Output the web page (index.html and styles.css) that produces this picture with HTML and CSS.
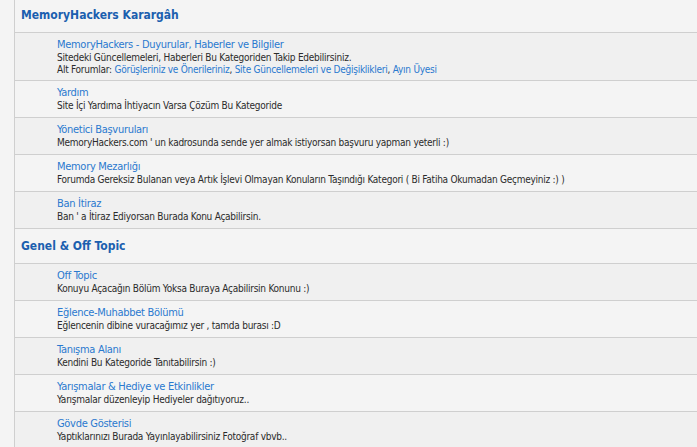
FILE: index.html
```html
<!DOCTYPE html>
<html lang="tr">
<head>
    <meta charset="UTF-8">
    <title>MemoryHackers Forum</title>
    <link rel="stylesheet" href="styles.css">
</head>
<body>

<div class="forumlist">
    <div class="category">MemoryHackers Karargâh</div>

    <div class="forum dark">
        <a class="title" href="#">MemoryHackers - Duyurular, Haberler ve Bilgiler</a>
        <p class="desc">Sitedeki Güncellemeleri, Haberleri Bu Kategoriden Takip Edebilirsiniz.</p>
        <p class="desc">Alt Forumlar: <a href="#">Görüşleriniz ve Önerileriniz</a>, <a href="#">Site Güncellemeleri ve Değişiklikleri</a>, <a href="#">Ayın Üyesi</a></p>
    </div>
    <div class="forum">
        <a class="title" href="#">Yardım</a>
        <p class="desc">Site İçi Yardıma İhtiyacın Varsa Çözüm Bu Kategoride</p>
    </div>
    <div class="forum dark">
        <a class="title" href="#">Yönetici Başvuruları</a>
        <p class="desc">MemoryHackers.com ' un kadrosunda sende yer almak istiyorsan başvuru yapman yeterli :)</p>
    </div>
    <div class="forum">
        <a class="title" href="#">Memory Mezarlığı</a>
        <p class="desc">Forumda Gereksiz Bulanan veya Artık İşlevi Olmayan Konuların Taşındığı Kategori ( Bi Fatiha Okumadan Geçmeyiniz :) )</p>
    </div>
    <div class="forum dark">
        <a class="title" href="#">Ban İtiraz</a>
        <p class="desc">Ban ' a İtiraz Ediyorsan Burada Konu Açabilirsin.</p>
    </div>

    <div class="category">Genel &amp; Off Topic</div>

    <div class="forum dark">
        <a class="title" href="#">Off Topic</a>
        <p class="desc">Konuyu Açacağın Bölüm Yoksa Buraya Açabilirsin Konunu :)</p>
    </div>
    <div class="forum">
        <a class="title" href="#">Eğlence-Muhabbet Bölümü</a>
        <p class="desc">Eğlencenin dibine vuracağımız yer , tamda burası :D</p>
    </div>
    <div class="forum dark">
        <a class="title" href="#">Tanışma Alanı</a>
        <p class="desc">Kendini Bu Kategoride Tanıtabilirsin :)</p>
    </div>
    <div class="forum">
        <a class="title" href="#">Yarışmalar &amp; Hediye ve Etkinlikler</a>
        <p class="desc">Yarışmalar düzenleyip Hediyeler dağıtıyoruz..</p>
    </div>
    <div class="forum dark">
        <a class="title" href="#">Gövde Gösterisi</a>
        <p class="desc">Yaptıklarınızı Burada Yayınlayabilirsiniz Fotoğraf vbvb..</p>
    </div>
</div>

</body>
</html>
```

FILE: styles.css
```css
body {
    margin: 0;
    padding: 0;
    background-color: #f4f4f4;
    font-family: "DejaVu Sans Condensed", "DejaVu Sans", sans-serif;
    font-stretch: condensed;
    color: #2b2b2b;
    overflow: hidden;
}
a {
    color: #2a79cf;
    text-decoration: none;
}
.forumlist {
    margin-top: -2px;
    margin-left: 14px;
    border-left: 1px solid #cfcfcf;
}
.category {
    height: 34px;
    line-height: 34px;
    padding-left: 6px;
    font-size: 12px;
    font-weight: bold;
    color: #1b5faf;
    border-bottom: 1px solid #cfcfcf;
}
.forum {
    min-height: 27px;
    padding: 5px 0 4px 42px;
    background-color: #f4f4f4;
    border-bottom: 1px solid #cfcfcf;
}
.forum.dark {
    background-color: #f0f0f0;
}
.forum .title {
    display: block;
    font-size: 11px;
    line-height: 14px;
    letter-spacing: -0.3px;
}
.desc {
    margin: 0;
    font-size: 10px;
    line-height: 12px;
    letter-spacing: -0.25px;
}
```
